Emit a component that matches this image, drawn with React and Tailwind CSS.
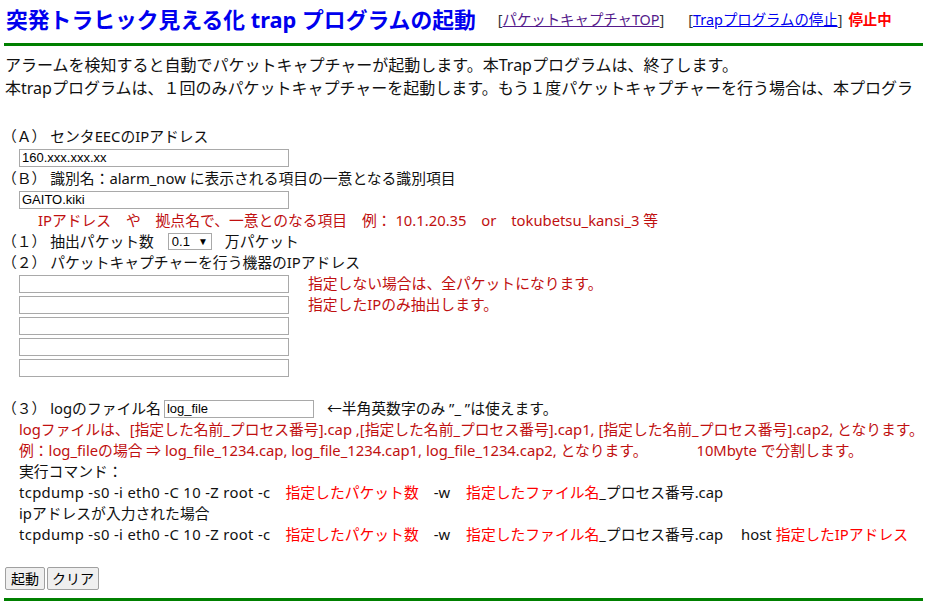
import React from "react";

const jp = "font-['Noto_Sans','Noto_Sans_CJK_JP',sans-serif]";

function Row({ children, className = "" }) {
  return <div className={`flex h-[21px] items-center whitespace-nowrap ${className}`}>{children}</div>;
}

function TextInput({ value = "", className = "w-[270px]" }) {
  return (
    <input
      readOnly
      value={value}
      className={`h-[18px] border border-[#a9a9a9] bg-white px-[2px] font-['Liberation_Sans',sans-serif] text-[13px] text-black outline-none ${className}`}
    />
  );
}

export default function App() {
  return (
    <div className={`${jp} min-h-[606px] w-[927px] overflow-hidden bg-white text-[14.8px] text-[#111]`}>
      <div className="flex h-[43px] items-center pl-[6px] pb-[3px] whitespace-nowrap">
        <span className="text-[21.8px] font-bold text-[#0000ee]">突発トラヒック見える化 trap プログラムの起動</span>
        <span className="ml-[22px] text-[14.4px] text-[#333]">
          [<a className="text-[#551a8b] underline">パケットキャプチャTOP</a>]
        </span>
        <span className="ml-[24px] text-[14.4px] text-[#333]">
          [<a className="text-[#0000ee] underline">Trapプログラムの停止</a>]
        </span>
        <span className="ml-[6px] text-[14.4px] font-bold text-[#ff0000]">停止中</span>
      </div>
      <div className="mx-[4px] h-[3px] bg-[#008000]" />

      <div className="mt-[8px] pl-[5px] text-[16px] leading-[23px] whitespace-nowrap overflow-hidden">
        <div>アラームを検知すると自動でパケットキャプチャーが起動します。本Trapプログラムは、終了します。</div>
        <div>本trapプログラムは、１回のみパケットキャプチャーを起動します。もう１度パケットキャプチャーを行う場合は、本プログラ</div>
      </div>

      <div className="mt-[26px] flex flex-col">
        <Row className="pl-[2px]">（Ａ） センタEECのIPアドレス</Row>
        <Row className="pl-[19px]"><TextInput value="160.xxx.xxx.xx" /></Row>
        <Row className="pl-[2px]">（Ｂ） 識別名：alarm_now に表示される項目の一意となる識別項目</Row>
        <Row className="pl-[19px]"><TextInput value="GAITO.kiki" /></Row>
        <Row className="pl-[38px] text-[#c01010]">
          IPアドレス　や　拠点名で、一意とのなる項目　例： 10.1.20.35　or　tokubetsu_kansi_3 等
        </Row>
        <Row className="pl-[2px]">
          （１） 抽出パケット数
          <span className="ml-[14px] flex h-[17px] w-[44px] items-center justify-between border border-[#a9a9a9] bg-white px-[3px] font-['Liberation_Sans',sans-serif] text-[13px] text-black">
            <span>0.1</span>
            <span className="text-[10px]">▼</span>
          </span>
          <span className="ml-[13px]">万パケット</span>
        </Row>
        <Row className="pl-[2px]">（２） パケットキャプチャーを行う機器のIPアドレス</Row>
        <div className="flex pl-[19px]">
          <div className="flex flex-col">
            {[0, 1, 2, 3, 4].map((i) => (
              <Row key={i}><TextInput /></Row>
            ))}
          </div>
          <div className="ml-[19px] flex flex-col text-[#c01010]">
            <Row>指定しない場合は、全パケットになります。</Row>
            <Row>指定したIPのみ抽出します。</Row>
          </div>
        </div>
        <div className="h-[20px]" />
        <Row className="pl-[2px]">
          （３） logのファイル名
          <TextInput value="log_file" className="ml-[3px] w-[150px]" />
          <span className="ml-[13px]">←半角英数字のみ ”_ ”は使えます。</span>
        </Row>
        <Row className="pl-[19px] text-[#c01010]">
          logファイルは、[指定した名前_プロセス番号].cap ,[指定した名前_プロセス番号].cap1, [指定した名前_プロセス番号].cap2, となります。
        </Row>
        <Row className="pl-[19px] text-[#c01010]">
          例：log_fileの場合 ⇒ log_file_1234.cap, log_file_1234.cap1, log_file_1234.cap2, となります。<span className="ml-[49px]">10Mbyte で分割します。</span>
        </Row>
        <Row className="pl-[19px]">実行コマンド：</Row>
        <Row className="pl-[19px]">
          <span className="tracking-[0.35px]">tcpdump -s0 -i eth0 -C 10 -Z root -c</span>
          <span className="ml-[15px] text-[#ff0000]">指定したパケット数</span>
          <span className="ml-[15px]">-w</span>
          <span className="ml-[16px] text-[#ff0000]">指定したファイル名</span>_プロセス番号.cap
        </Row>
        <Row className="pl-[19px]">ipアドレスが入力された場合</Row>
        <Row className="pl-[19px]">
          <span className="tracking-[0.35px]">tcpdump -s0 -i eth0 -C 10 -Z root -c</span>
          <span className="ml-[15px] text-[#ff0000]">指定したパケット数</span>
          <span className="ml-[15px]">-w</span>
          <span className="ml-[16px] text-[#ff0000]">指定したファイル名</span>_プロセス番号.cap
          <span className="ml-[18px]">host</span>
          <span className="ml-[4px] text-[#ff0000]">指定したIPアドレス</span>
        </Row>
        <div className="mt-[22px] flex gap-[2px] pl-[5px]">
          <button className="h-[23px] rounded-[2px] border border-[#a0a0a0] bg-[#efefef] px-[5px] text-[14px] leading-none text-black">起動</button>
          <button className="h-[23px] rounded-[2px] border border-[#a0a0a0] bg-[#efefef] px-[4px] text-[14px] leading-none text-black">クリア</button>
        </div>
        <div className="mx-[4px] mt-[8px] h-[3px] bg-[#008000]" />
      </div>
    </div>
  );
}
